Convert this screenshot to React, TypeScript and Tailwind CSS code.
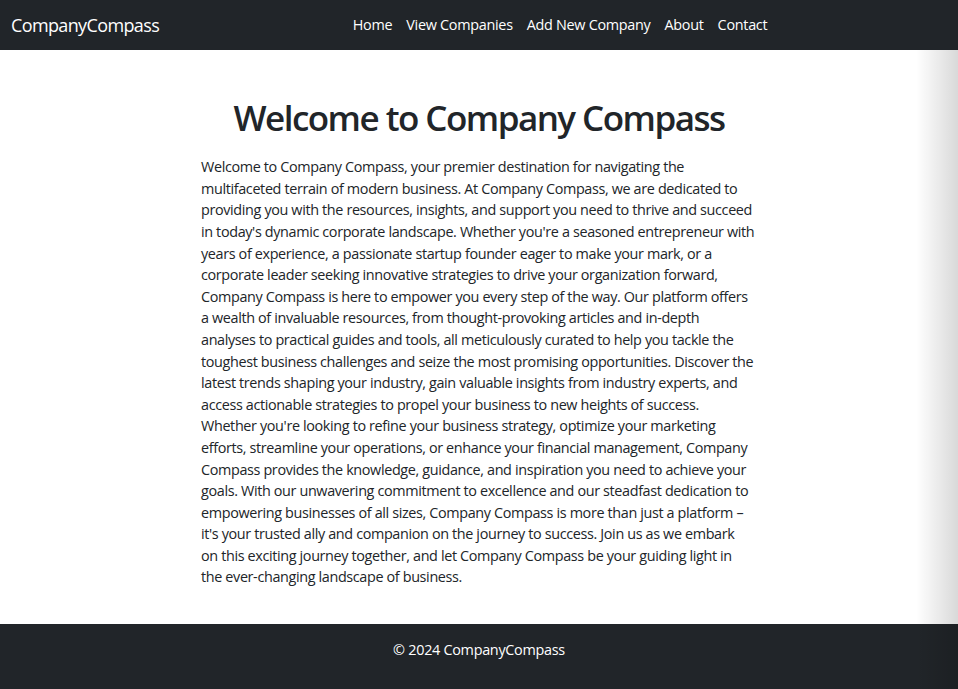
import React from "react";

const links = ["Home", "View Companies", "Add New Company", "About", "Contact"];

// les retours à la ligne forcés collent au rendu de la maquette
const intro = [
  "Welcome to Company Compass, your premier destination for navigating the multifaceted terrain of modern business. At Company Compass, we are dedicated to providing you with the resources, insights, and support you need to thrive and succeed in today's dynamic corporate landscape. Whether you're a seasoned entrepreneur with years of experience, a passionate startup founder eager to make your mark, or a corporate leader seeking innovative strategies to drive your organization forward, Company Compass is here to empower you every step of the way. Our platform offers a wealth of invaluable resources, from thought-provoking articles and in-depth analyses to practical guides and tools, all meticulously curated to help you tackle the toughest business challenges and seize the most promising opportunities. Discover the latest trends shaping your industry, gain valuable insights from industry experts, and access actionable strategies to propel your business to new heights of success. Whether you're looking to refine your business strategy, optimize your marketing efforts, streamline your operations, or enhance your financial management, Company Compass provides the knowledge, guidance, and inspiration you need to achieve your goals. With our unwavering commitment to excellence and our steadfast dedication to empowering businesses of all sizes, Company Compass is more than just a platform – it's your trusted ally and companion on the journey to success. Join us as we embark",
  "on this exciting journey together, and let Company Compass be your guiding light in",
  "the ever-changing landscape of business.",
];

export default function App() {
  return (
    <div className="min-h-[689px] flex flex-col bg-white text-[#212529] font-['Open_Sans',sans-serif]">
      {/* navbar */}
      <nav className="h-[50px] bg-[#212529] flex items-center px-[11px]">
        <a href="#" className="mr-[14px] text-white text-[18px] tracking-[-0.035em] leading-none">
          CompanyCompass
        </a>
        <div className="flex-1 flex justify-center">
          <ul className="flex items-center">
            {links.map((l) => (
              <li key={l}>
                <a href="#" className="block px-[7px] text-white text-[14.4px] tracking-[-0.02em]">
                  {l}
                </a>
              </li>
            ))}
          </ul>
        </div>
      </nav>

      <div className="relative flex-1 flex flex-col">
        <main className="flex-1 flex flex-col items-center pt-[46px] pb-[36px]">
          <div className="w-[556px]">
            <h1 className="text-center text-[35px] leading-[1.234] font-semibold tracking-[-0.044em] mb-[17px]">
              Welcome to Company Compass
            </h1>
            <p className="text-[14.4px] leading-[21.6px] tracking-[-0.025em]">
              {intro.map((line, i) => (
                <React.Fragment key={i}>
                  {i > 0 && <br />}
                  {line}
                </React.Fragment>
              ))}
            </p>
          </div>
        </main>

        <footer className="bg-[#212529] text-white text-center text-[14.4px] leading-[21.6px] pt-[15px] pb-[28.4px] tracking-[-0.02em]">
          © 2024 CompanyCompass
        </footer>

        {/* ombre sur le bord droit */}
        <div className="pointer-events-none absolute top-0 bottom-0 right-0 w-[42px] bg-linear-to-r from-transparent to-black/15" />
      </div>
    </div>
  );
}
